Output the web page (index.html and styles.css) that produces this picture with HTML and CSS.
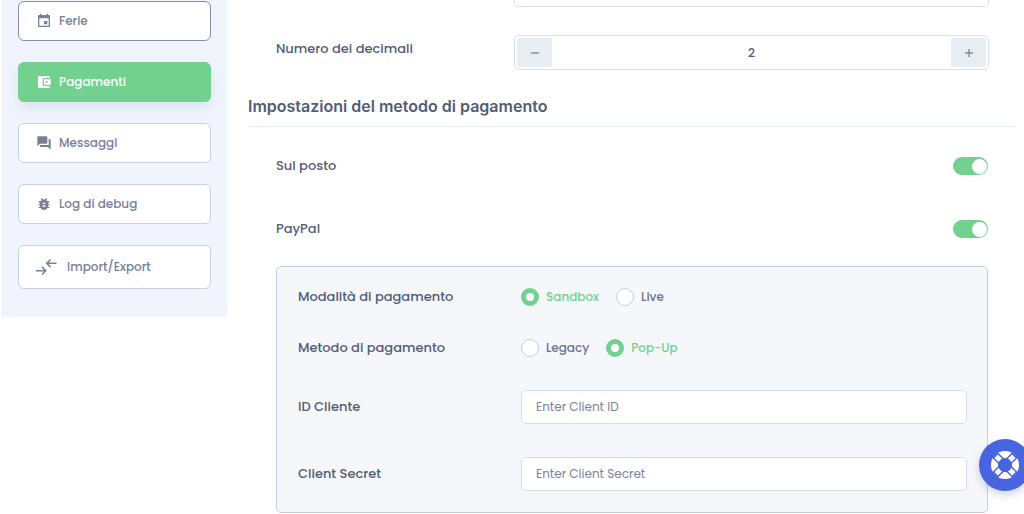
FILE: index.html
```html
<!DOCTYPE html>
<html lang="it">
<head>
<meta charset="utf-8">
<meta name="viewport" content="width=device-width, initial-scale=1">
<title>Impostazioni - Pagamenti</title>
<link rel="stylesheet" href="styles.css">
</head>
<body>
<div class="layout">
  <nav class="sidebar" aria-label="Impostazioni">
    <button type="button" class="nav-item nav-item--focus">
      <svg class="icon" viewBox="0 0 24 24" aria-hidden="true"><path d="M17 12h-5v5h5v-5zM16 1v2H8V1H6v2H5c-1.110 0-1.990.9-1.990 2L3 19c0 1.100.89 2 2 2h14c1.100 0 2-.9 2-2V5c0-1.100-.9-2-2-2h-1V1h-2zm3 18H5V8h14v11z"/></svg>
      <span>Ferie</span>
    </button>
    <button type="button" class="nav-item nav-item--active" aria-current="page">
      <svg class="icon" viewBox="0 0 24 24" aria-hidden="true"><path d="M21 18v1c0 1.100-.9 2-2 2H5c-1.110 0-2-.9-2-2V5c0-1.100.89-2 2-2h14c1.100 0 2 .9 2 2v1h-9c-1.110 0-2 .9-2 2v8c0 1.100.89 2 2 2h9zm-9-2h10V8H12v8zm4-2.500c-.83 0-1.500-.67-1.500-1.500s.67-1.500 1.500-1.500 1.500.67 1.500 1.500-.67 1.500-1.500 1.500z"/></svg>
      <span>Pagamenti</span>
    </button>
    <button type="button" class="nav-item">
      <svg class="icon" viewBox="0 0 24 24" aria-hidden="true"><path d="M21 6h-2v9H6v2c0 .55.45 1 1 1h11l4 4V7c0-.55-.45-1-1-1zm-4 6V3c0-.55-.45-1-1-1H3c-.55 0-1 .45-1 1v14l4-4h10c.55 0 1-.45 1-1z"/></svg>
      <span>Messaggi</span>
    </button>
    <button type="button" class="nav-item">
      <svg class="icon" viewBox="0 0 24 24" aria-hidden="true"><path d="M20 8h-2.810c-.45-.78-1.070-1.450-1.820-1.960L17 4.410 15.590 3l-2.170 2.170C12.960 5.060 12.490 5 12 5s-.96.06-1.410.17L8.410 3 7 4.410l1.620 1.630C7.880 6.550 7.260 7.220 6.810 8H4v2h2.090c-.05.33-.09.66-.09 1v1H4v2h2v1c0 .34.04.67.09 1H4v2h2.810c1.040 1.790 2.970 3 5.190 3s4.150-1.210 5.190-3H20v-2h-2.090c.05-.33.09-.66.09-1v-1h2v-2h-2v-1c0-.34-.04-.67-.09-1H20V8zm-6 8h-4v-2h4v2zm0-4h-4v-2h4v2z"/></svg>
      <span>Log di debug</span>
    </button>
    <button type="button" class="nav-item nav-item--tall">
      <svg class="icon icon--wide" viewBox="0 0 22 18" aria-hidden="true"><path d="M0 12.700h9.500M6 8.900l3.800 3.800L6 16.500M20.500 5.300H11M14.500 1.500l-3.800 3.800 3.800 3.800"/></svg>
      <span>Import/Export</span>
    </button>
  </nav>

  <main class="content">
    <section class="fields">
      <div class="row">
        <select class="cut-select" aria-label="Formato del prezzo"></select>
      </div>
      <div class="row row--stepper">
        <label class="label" for="decimals">Numero dei decimali</label>
        <div class="stepper">
          <button type="button" class="step" aria-label="Diminuisci"><svg viewBox="0 0 10 10" aria-hidden="true"><path d="M1 5h8"/></svg></button>
          <input class="step-value" id="decimals" type="text" inputmode="numeric" value="2">
          <button type="button" class="step" aria-label="Aumenta"><svg viewBox="0 0 10 10" aria-hidden="true"><path d="M1 5h8M5 1v8"/></svg></button>
        </div>
      </div>
    </section>

    <h2 class="heading">Impostazioni del metodo di pagamento</h2>

    <section class="fields fields--methods">
      <div class="switch-row">
        <label class="label" for="onsite">Sul posto</label>
        <input class="switch" id="onsite" type="checkbox" role="switch" checked>
      </div>
      <div class="switch-row">
        <label class="label" for="paypal">PayPal</label>
        <input class="switch" id="paypal" type="checkbox" role="switch" checked>
      </div>

      <div class="panel">
        <div class="row" role="radiogroup" aria-labelledby="mode-label">
          <span class="label" id="mode-label">Modalità di pagamento</span>
          <div class="radios">
            <label class="radio"><input type="radio" name="mode" checked><span>Sandbox</span></label>
            <label class="radio"><input type="radio" name="mode"><span>Live</span></label>
          </div>
        </div>
        <div class="row" role="radiogroup" aria-labelledby="method-label">
          <span class="label" id="method-label">Metodo di pagamento</span>
          <div class="radios">
            <label class="radio"><input type="radio" name="method"><span>Legacy</span></label>
            <label class="radio"><input type="radio" name="method" checked><span>Pop-Up</span></label>
          </div>
        </div>
        <div class="row">
          <label class="label" for="client-id">ID Cliente</label>
          <input class="text-input" id="client-id" type="text" placeholder="Enter Client ID">
        </div>
        <div class="row">
          <label class="label" for="client-secret">Client Secret</label>
          <input class="text-input" id="client-secret" type="text" placeholder="Enter Client Secret">
        </div>
      </div>
    </section>
  </main>
</div>

<button type="button" class="help" aria-label="Aiuto">
  <svg viewBox="0 0 28 28" aria-hidden="true">
    <circle class="ring" cx="14" cy="14" r="10.500"/>
    <g class="gap"><path d="M4 4l20 20M24 4L4 24"/></g>
    <g class="strap"><path d="M5.200 5.200l5 5M22.800 5.200l-5 5M5.200 22.800l5-5M22.800 22.800l-5-5"/></g>
    <circle class="hole" cx="14" cy="14" r="7"/>
  </svg>
</button>
</body>
</html>
```
FILE: styles.css
```css
* {
  box-sizing: border-box;
}

body {
  margin: 0;
  overflow-x: hidden;
  background: #fff;
  color: #535c76;
  font-family: Poppins, Inter, "Open Sans", sans-serif;
  font-size: 12px;
  font-weight: 500;
}

button,
input,
select {
  margin: 0;
  font: inherit;
  color: inherit;
}

.layout {
  display: flex;
  align-items: flex-start;
  gap: 21px;
  padding: 0 8px 0 1px;
}

/* Sidebar */
.sidebar {
  display: flex;
  flex: 0 0 226px;
  flex-direction: column;
  gap: 21px;
  padding: 1px 16px 28px 17px;
  border-radius: 0 0 4px 4px;
  background: #f1f4fc;
}

.nav-item {
  display: flex;
  align-items: center;
  gap: 7px;
  height: 40px;
  padding: 0 17px;
  border: 1px solid #c9cfdf;
  border-radius: 6px;
  background: #fff;
  color: #788099;
  text-align: left;
}

.nav-item--focus {
  border-color: #858ea9;
}

.nav-item--active {
  border-color: #72d18f;
  background: #72d18f;
  box-shadow: 0 5px 12px rgba(60, 110, 120, 0.12);
  color: #fff;
}

.nav-item--tall {
  gap: 9px;
  height: 44px;
}

.icon {
  flex: none;
  width: 16px;
  height: 16px;
  fill: currentColor;
}

.icon--wide {
  width: 22px;
  height: 18px;
  fill: none;
  stroke: currentColor;
  stroke-width: 1.5;
}

/* Content */
.content {
  flex: 1;
  min-width: 0;
}

.fields {
  padding: 0 27px 0 28px;
}

.row {
  display: grid;
  grid-template-columns: 238px 1fr;
  align-items: center;
}

.label {
  font-size: 13px;
  line-height: 18px;
}

.cut-select {
  grid-column: 2;
  appearance: none;
  width: 100%;
  height: 7px;
  padding: 0;
  border: 1px solid #d8dee9;
  border-top: 0;
  border-radius: 0 0 5px 5px;
  background: #fff;
}

.row--stepper {
  align-items: start;
  margin-top: 28px;
}

.row--stepper .label {
  padding-top: 5px;
}

.stepper {
  display: flex;
  height: 35px;
  padding: 2px;
  border: 1px solid #d5deea;
  border-radius: 5px;
}

.step {
  display: flex;
  align-items: center;
  justify-content: center;
  width: 35px;
  padding: 0;
  border: 0;
  border-radius: 3px 0 0 3px;
  background: #e8edf2;
  color: #858c9c;
}

.step:last-child {
  border-radius: 0 3px 3px 0;
}

.step svg {
  width: 10px;
  height: 10px;
  fill: none;
  stroke: currentColor;
  stroke-width: 1.4;
}

.step-value {
  flex: 1;
  min-width: 0;
  padding: 0;
  border: 0;
  background: none;
  text-align: center;
}

.heading {
  margin: 25px 0 0;
  padding-bottom: 9px;
  border-bottom: 1px solid #e4ebf1;
  font-family: Inter, sans-serif;
  font-size: 16px;
  font-weight: 600;
  line-height: 22px;
}

.fields--methods {
  padding: 30px 28px 0;
}

.switch-row {
  display: flex;
  align-items: center;
  justify-content: space-between;
  height: 18px;
  margin-bottom: 45px;
}

.switch-row + .switch-row {
  margin-bottom: 28px;
}

.switch {
  appearance: none;
  display: flex;
  align-items: center;
  justify-content: flex-end;
  width: 35px;
  height: 18px;
  padding: 1px;
  border-radius: 9px;
  background: #72d18f;
}

.switch::before {
  width: 15px;
  height: 15px;
  border-radius: 50%;
  background: #fff;
  content: "";
}

.switch:not(:checked) {
  justify-content: flex-start;
  background: #c9cfdf;
}

/* PayPal options */
.panel {
  display: grid;
  gap: 33px;
  padding: 21px 20px;
  border: 1px solid #c5cddb;
  border-radius: 5px;
  background: #f5f7fb;
}

.panel .row {
  grid-template-columns: 223px 1fr;
  padding-left: 1px;
}

.radios {
  display: flex;
  gap: 17px;
}

.radio {
  display: flex;
  align-items: center;
  gap: 7px;
  color: #6b748d;
  line-height: 18px;
}

.radio input {
  appearance: none;
  width: 18px;
  height: 18px;
  border: 1px solid #c5cbdb;
  border-radius: 50%;
  background: #fff;
}

.radio input:checked {
  border: 5px solid #72d18f;
}

.radio input:checked + span {
  color: #72d18f;
}

.text-input {
  width: 100%;
  height: 34px;
  padding: 0 14px;
  border: 1px solid #d5dbe6;
  border-radius: 5px;
  background: #fff;
  font-weight: 400;
}

.text-input::placeholder {
  color: #7b849c;
  opacity: 1;
}

/* Help button, anchored to the window corner */
.help {
  position: fixed;
  right: -7px;
  bottom: 23px;
  display: flex;
  align-items: center;
  justify-content: center;
  width: 52px;
  height: 52px;
  padding: 0;
  border: 0;
  border-radius: 50%;
  background: #4865df;
  box-shadow: 0 4px 8px rgba(60, 90, 160, 0.25);
}

.help svg {
  width: 28px;
  height: 28px;
  fill: none;
}

.ring {
  stroke: #fff;
  stroke-width: 7;
}

.gap {
  stroke: #4865df;
  stroke-width: 8;
}

.strap {
  stroke: #fff;
  stroke-width: 5;
}

.hole {
  fill: #4865df;
}
```
